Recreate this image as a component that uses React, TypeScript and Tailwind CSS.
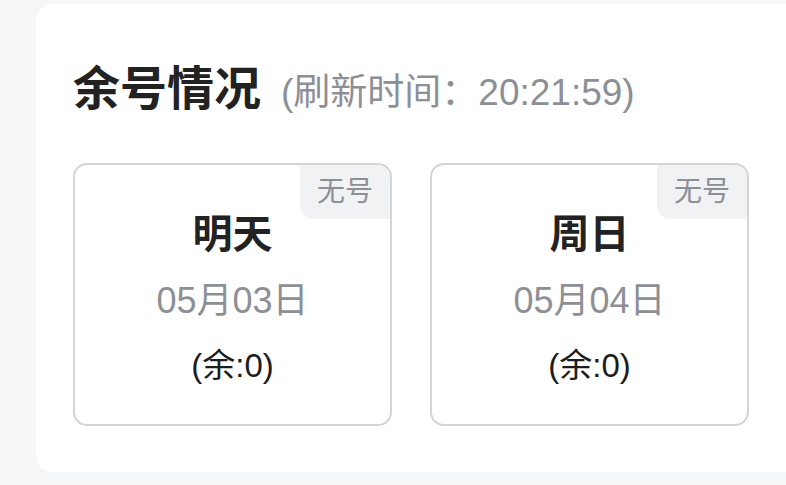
const days = [
  { label: '明天', date: '05月03日', left: 0 },
  { label: '周日', date: '05月04日', left: 0 },
];

function DayCard({ label, date, left }: { label: string; date: string; left: number }) {
  return (
    <div className="relative w-[319px] h-[263px] rounded-[14px] border-2 border-[#d3d4d6] bg-white flex flex-col items-center justify-center">
      <div className="absolute top-0 right-0 w-[90px] h-[54px] bg-[#f1f2f4] rounded-bl-[14px] rounded-tr-[12px] flex items-center justify-center text-[28px] text-[#8c9096] leading-none">
        无号
      </div>
      <div className="text-[40px] font-semibold text-[#222] leading-none mt-[6px]">{label}</div>
      <div className="text-[36px] text-[#8c9096] leading-none mt-[29px]">{date}</div>
      <div className="text-[33px] text-[#1c1c1c] leading-none mt-[30px]">(余:{left})</div>
    </div>
  );
}

export default function App() {
  return (
    <div
      className="w-full h-[485px] bg-[#f5f6f8] pt-[4px] pl-[36px] overflow-hidden"
      style={{ fontFamily: '"Liberation Sans", "Noto Sans CJK SC", sans-serif' }}
    >
      <div className="bg-white rounded-l-[16px] h-[468px] pl-[37px] pt-[61px]">
        <div className="flex items-baseline">
          <h1 className="text-[47px] font-semibold text-[#222] leading-none">余号情况</h1>
          <span className="text-[37px] text-[#8c9096] leading-none ml-[20px]">(刷新时间：20:21:59)</span>
        </div>
        <div className="flex gap-[38px] mt-[51px]">
          {days.map((d) => (
            <DayCard key={d.label} {...d} />
          ))}
        </div>
      </div>
    </div>
  );
}
